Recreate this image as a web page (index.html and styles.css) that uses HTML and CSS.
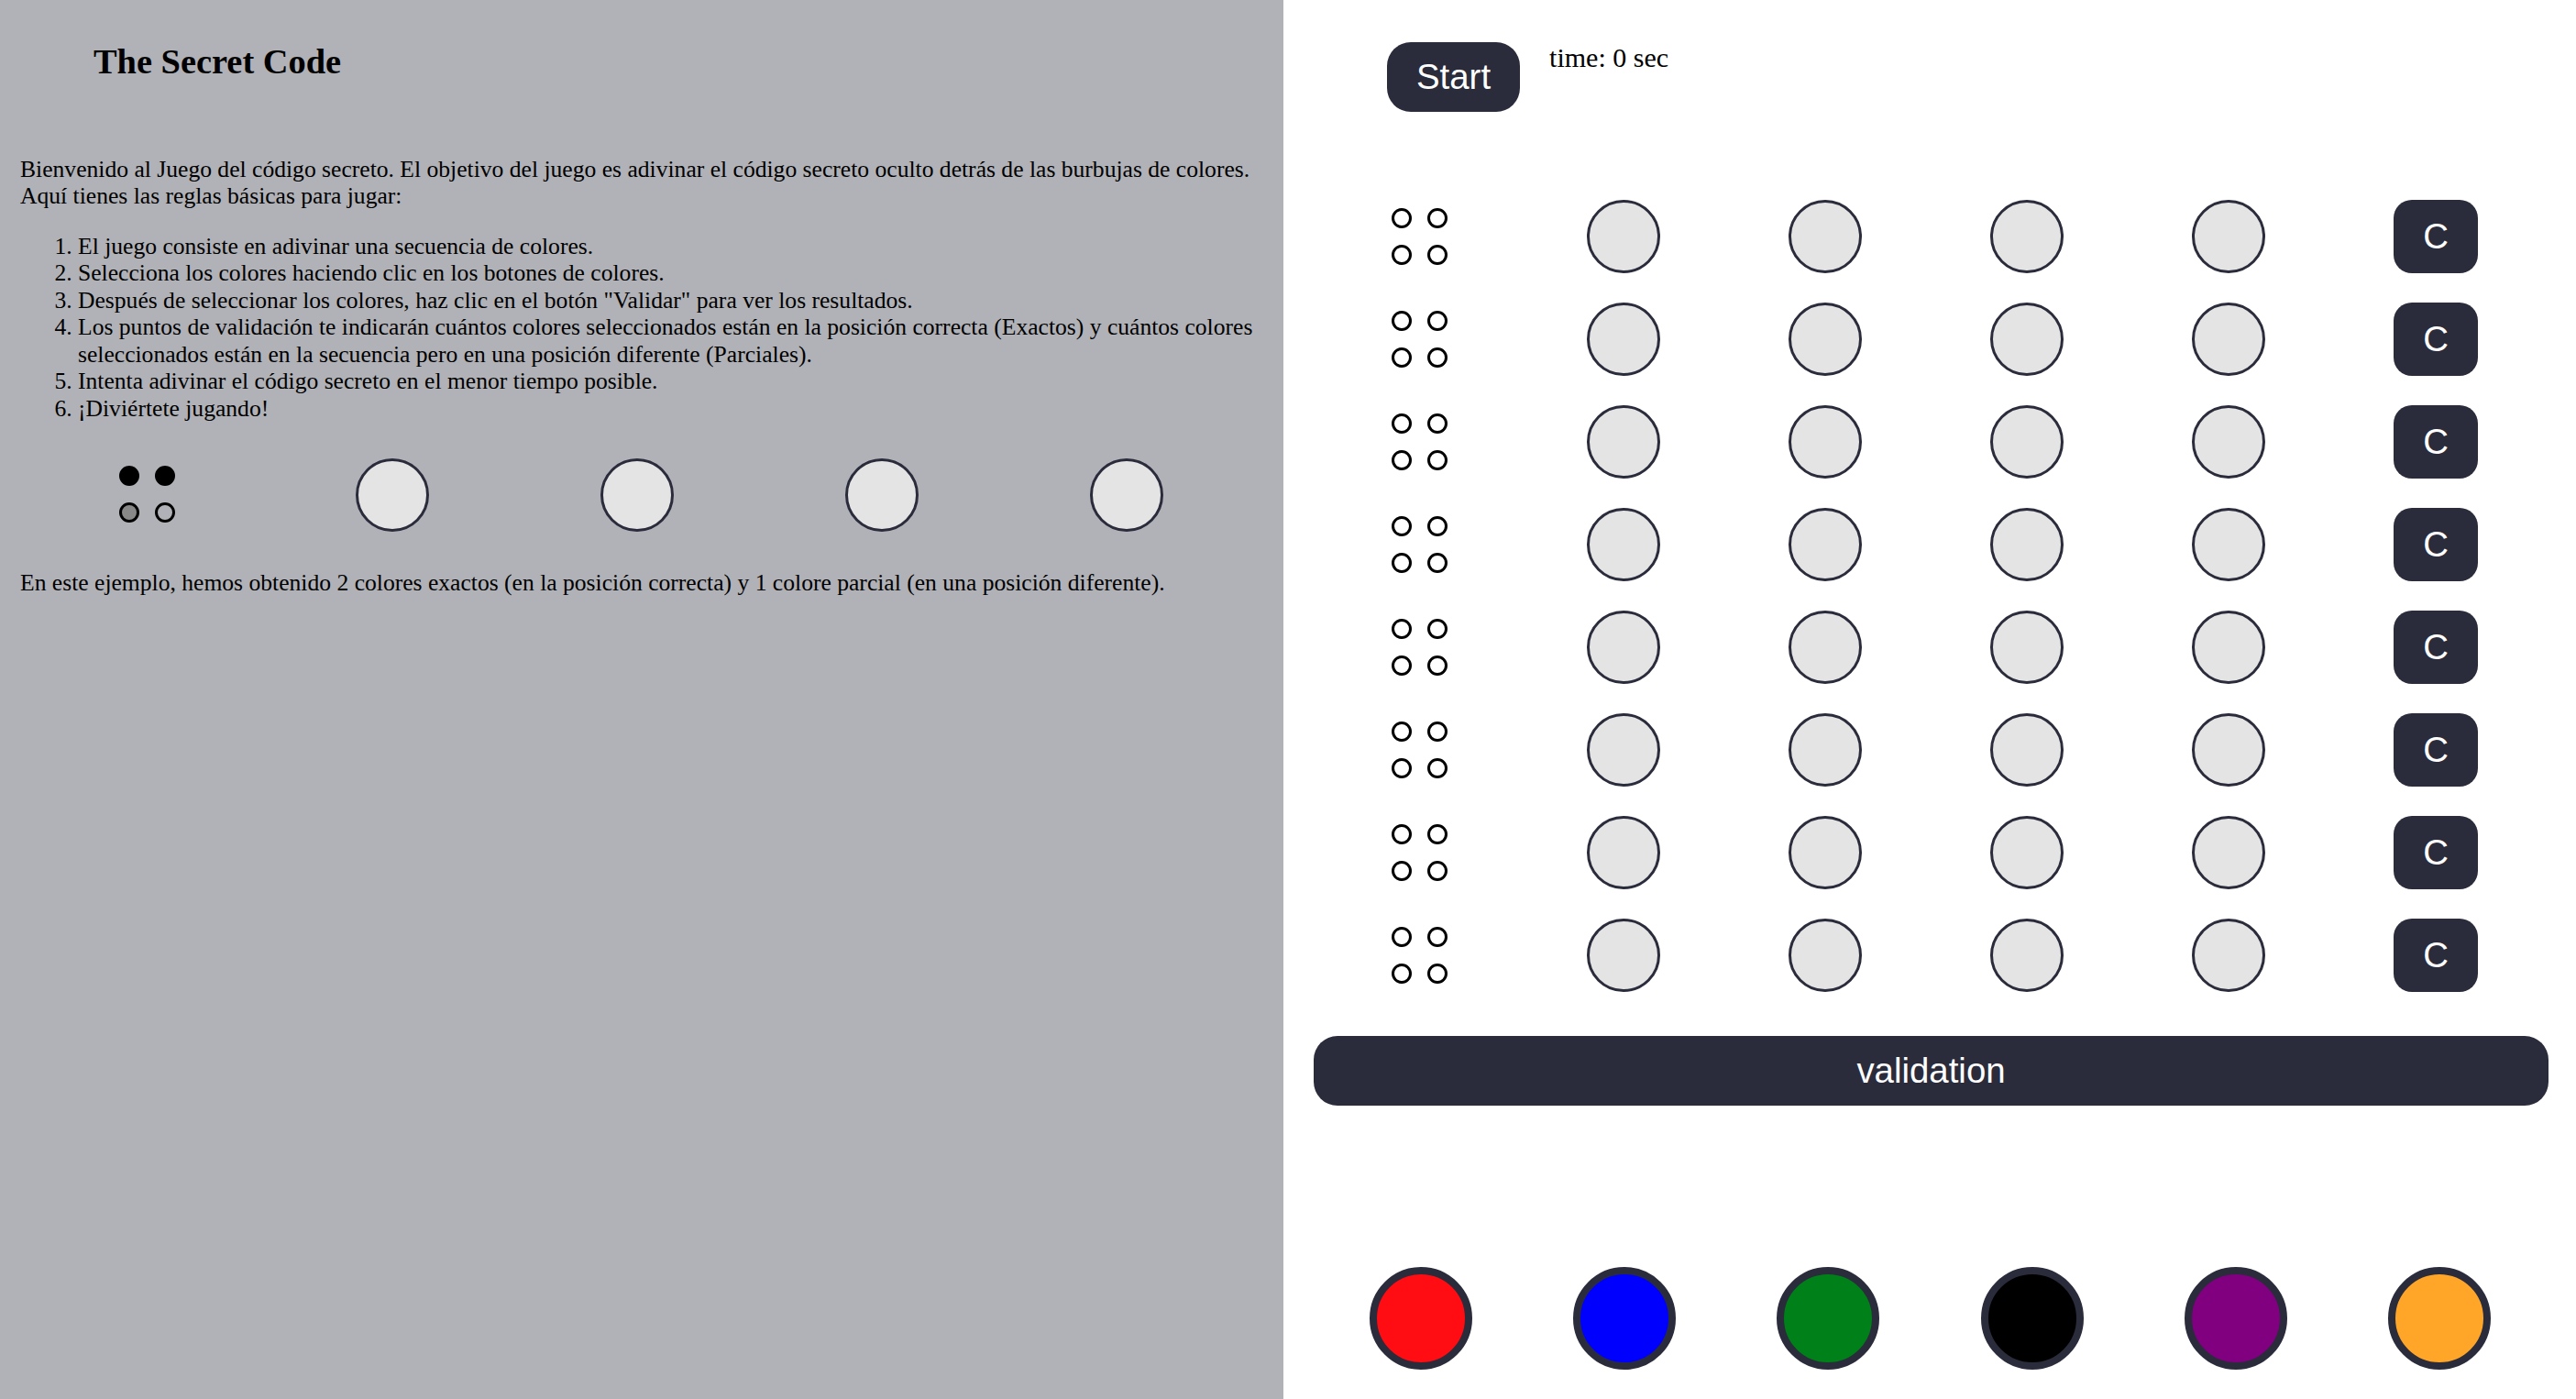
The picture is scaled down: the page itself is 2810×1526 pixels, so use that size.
FILE: index.html
```html
<!DOCTYPE html>
<html lang="es">
<head>
<meta charset="utf-8">
<title>The Secret Code</title>
<link rel="stylesheet" href="styles.css">
</head>
<body>
<div class="app">
  <section class="rules">
    <h2 class="title">The Secret Code</h2>
    <p class="intro">Bienvenido al Juego del código secreto. El objetivo del juego es adivinar el código secreto oculto detrás de las burbujas de colores. Aquí tienes las reglas básicas para jugar:</p>
    <ol class="steps">
      <li>El juego consiste en adivinar una secuencia de colores.</li>
      <li>Selecciona los colores haciendo clic en los botones de colores.</li>
      <li>Después de seleccionar los colores, haz clic en el botón "Validar" para ver los resultados.</li>
      <li>Los puntos de validación te indicarán cuántos colores seleccionados están en la posición correcta (Exactos) y cuántos colores seleccionados están en la secuencia pero en una posición diferente (Parciales).</li>
      <li>Intenta adivinar el código secreto en el menor tiempo posible.</li>
      <li>¡Diviértete jugando!</li>
    </ol>
    <div class="example">
      <div class="dots">
        <span class="dot exact"></span><span class="dot exact"></span>
        <span class="dot partial"></span><span class="dot"></span>
      </div>
      <span class="peg"></span>
      <span class="peg"></span>
      <span class="peg"></span>
      <span class="peg"></span>
    </div>
    <p class="note">En este ejemplo, hemos obtenido 2 colores exactos (en la posición correcta) y 1 colore parcial (en una posición diferente).</p>
  </section>

  <section class="game">
    <div class="game-header">
      <button class="btn start">Start</button>
      <p class="timer">time: 0 sec</p>
    </div>

    <div class="board">
      <div class="row">
        <div class="dots"><span class="dot"></span><span class="dot"></span><span class="dot"></span><span class="dot"></span></div>
        <span class="peg"></span><span class="peg"></span><span class="peg"></span><span class="peg"></span>
        <button class="btn clear">C</button>
      </div>
      <div class="row">
        <div class="dots"><span class="dot"></span><span class="dot"></span><span class="dot"></span><span class="dot"></span></div>
        <span class="peg"></span><span class="peg"></span><span class="peg"></span><span class="peg"></span>
        <button class="btn clear">C</button>
      </div>
      <div class="row">
        <div class="dots"><span class="dot"></span><span class="dot"></span><span class="dot"></span><span class="dot"></span></div>
        <span class="peg"></span><span class="peg"></span><span class="peg"></span><span class="peg"></span>
        <button class="btn clear">C</button>
      </div>
      <div class="row">
        <div class="dots"><span class="dot"></span><span class="dot"></span><span class="dot"></span><span class="dot"></span></div>
        <span class="peg"></span><span class="peg"></span><span class="peg"></span><span class="peg"></span>
        <button class="btn clear">C</button>
      </div>
      <div class="row">
        <div class="dots"><span class="dot"></span><span class="dot"></span><span class="dot"></span><span class="dot"></span></div>
        <span class="peg"></span><span class="peg"></span><span class="peg"></span><span class="peg"></span>
        <button class="btn clear">C</button>
      </div>
      <div class="row">
        <div class="dots"><span class="dot"></span><span class="dot"></span><span class="dot"></span><span class="dot"></span></div>
        <span class="peg"></span><span class="peg"></span><span class="peg"></span><span class="peg"></span>
        <button class="btn clear">C</button>
      </div>
      <div class="row">
        <div class="dots"><span class="dot"></span><span class="dot"></span><span class="dot"></span><span class="dot"></span></div>
        <span class="peg"></span><span class="peg"></span><span class="peg"></span><span class="peg"></span>
        <button class="btn clear">C</button>
      </div>
      <div class="row">
        <div class="dots"><span class="dot"></span><span class="dot"></span><span class="dot"></span><span class="dot"></span></div>
        <span class="peg"></span><span class="peg"></span><span class="peg"></span><span class="peg"></span>
        <button class="btn clear">C</button>
      </div>
    </div>

    <button class="btn validate">validation</button>

    <div class="palette">
      <span class="swatch red"></span>
      <span class="swatch blue"></span>
      <span class="swatch green"></span>
      <span class="swatch black"></span>
      <span class="swatch purple"></span>
      <span class="swatch orange"></span>
    </div>
  </section>
</div>
</body>
</html>
```

FILE: styles.css
```css
html, body {
  margin: 0;
  padding: 0;
  height: 100%;
}

body {
  font-family: "Liberation Serif", "Times New Roman", serif;
  color: #000;
  background: #fff;
}

.app {
  display: flex;
  height: 100vh;
}

/* ---------- left: rules ---------- */
.rules {
  flex: 0 0 1400px;
  box-sizing: border-box;
  background: #b1b2b7;
  padding: 45px 21px 0 22px;
  font-size: 25.6px;
  line-height: 29.44px;
}

.title {
  margin: 0 0 81px 80px;
  font-size: 38.4px;
  line-height: 44px;
  font-weight: bold;
}

.intro {
  margin: 0 0 25px;
}

.steps {
  margin: 0 0 40px;
  padding-left: 63px;
}

.example {
  display: grid;
  grid-template-columns: repeat(5, 267px);
  align-items: center;
  justify-items: center;
  margin: 0 0 41px 5px;
}

.note {
  margin: 0;
}

/* ---------- shared pieces ---------- */
.dots {
  display: grid;
  grid-template-columns: repeat(2, 22px);
  gap: 18px 17px;
}

.example .dots {
  margin-top: -2px;
}

.dot {
  width: 22px;
  height: 22px;
  box-sizing: border-box;
  border: 3px solid #000;
  border-radius: 50%;
}

.dot.exact {
  background: #000;
}

.dot.partial {
  background: #888;
}

.peg {
  width: 80px;
  height: 80px;
  box-sizing: border-box;
  border: 3px solid #2a2b3b;
  border-radius: 50%;
  background: #e4e4e4;
}

.btn {
  border: none;
  background: #2a2b3b;
  color: #fff;
  font-family: "Liberation Sans", Arial, Helvetica, sans-serif;
  font-size: 38.4px;
  padding: 0;
  cursor: pointer;
}

/* ---------- right: game ---------- */
.game {
  flex: 1;
  display: flex;
  flex-direction: column;
  box-sizing: border-box;
  padding: 46px 30px 32px 33px;
  background: #fff;
}

.game-header {
  display: flex;
  align-items: flex-start;
  gap: 32px;
  padding-left: 80px;
}

.start {
  height: 76px;
  padding: 0 32px;
  border-radius: 26px;
}

.timer {
  margin: 0;
  font-size: 30px;
  line-height: 34px;
}

.board {
  display: flex;
  flex-direction: column;
  gap: 32px;
  margin: 96px 0 0 2px;
}

.row {
  display: grid;
  grid-template-columns: 226px 220px 220px 220px 220px 232px;
  height: 80px;
  align-items: center;
  justify-items: center;
}

.clear {
  width: 92px;
  height: 80px;
  border-radius: 20px;
}

.validate {
  margin-top: 48px;
  height: 76px;
  width: 100%;
  border-radius: 26px;
}

.palette {
  margin: auto 0 0 6px;
  display: grid;
  grid-template-columns: repeat(6, 222.2px);
  justify-items: center;
}

.swatch {
  width: 112px;
  height: 112px;
  box-sizing: border-box;
  border: 8px solid #2a2b3b;
  border-radius: 50%;
}

.swatch.red { background: #ff0d12; }
.swatch.blue { background: #0000ff; }
.swatch.green { background: #008018; }
.swatch.black { background: #000; }
.swatch.purple { background: #800080; }
.swatch.orange { background: #ffa528; }
```
